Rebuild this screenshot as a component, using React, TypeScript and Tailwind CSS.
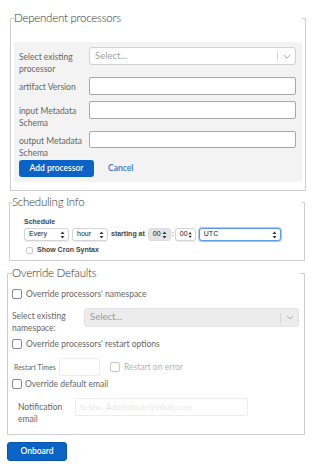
import React from "react";

const Chevron = () => (
  <svg width="8" height="5" viewBox="0 0 8 5" fill="none">
    <path d="M1 1l3 3 3-3" stroke="#aaa" strokeWidth="1" />
  </svg>
);

const UpDown = () => (
  <svg width="5" height="8" viewBox="0 0 5 8" fill="#333">
    <path d="M2.5 0.5L4.5 3H0.5z" />
    <path d="M2.5 7.5L4.5 5H0.5z" />
  </svg>
);

const RSelect = ({ disabled, w }: { disabled?: boolean; w: string }) => (
  <div
    className={`${w} flex items-center rounded-[3px] border ${
      disabled ? "bg-[#ececec] border-[#e2e2e2]" : "bg-white border-[#d2d2d2]"
    }`}
  >
    <span className={`flex-1 pl-[5px] text-[9.5px] ${disabled ? "text-[#9a9a9a]" : "text-[#a0a0a0]"}`}>Select...</span>
    <span className="h-[10px] w-px bg-[#d6d6d6]" />
    <span className="w-[17px] flex justify-center">
      <Chevron />
    </span>
  </div>
);

const MacSelect = ({ label, w, gray, focus }: { label: string; w: string; gray?: boolean; focus?: boolean }) => (
  <div
    className={`${w} h-[13px] flex items-center justify-between rounded-[3px] pl-[4px] pr-[3px] border ${
      gray
        ? "bg-[#e4e4e4] border-[#dcdcdc]"
        : focus
        ? "bg-white border-[#5b9ae8] shadow-[0_0_0_1px_#a9c9f3]"
        : "bg-white border-[#d4d4d4] shadow-[0_1px_1px_rgba(0,0,0,0.08)]"
    }`}
  >
    <span className="text-[7px] text-[#222]">{label}</span>
    <UpDown />
  </div>
);

const Check = ({ light, size = "w-[10px] h-[10px]" }: { light?: boolean; size?: string }) => (
  <span className={`${size} shrink-0 inline-block rounded-[2px] border bg-white ${light ? "border-[#c8c8c8]" : "border-[#8a8a8a]"}`} />
);

const legendCls = "w-full text-[11.5px] leading-[16px] font-light text-[#333] tracking-[-0.25px]";

export default function App() {
  return (
    <div className="w-[324px] h-[470px] bg-white overflow-hidden font-['Lato','Noto_Sans',sans-serif] text-[#666] pt-[10px]">
      {/* Dependent processors */}
      <fieldset className="ml-[10px] w-[296px] border border-[#cfcfcf] px-[3px] pb-[8px]">
        <legend className={legendCls}>Dependent processors</legend>
        <div className="mt-[16px] bg-[#f3f3f3] pl-[5px] pr-[6px] pt-[5px] pb-[5px]">
          <div className="flex items-start">
            <div className="w-[70px] pt-[4px] pb-[2px] text-[8.5px] leading-[12px]">Select existing processor</div>
            <div className="mb-[6px]">
              <RSelect w="w-[207px] h-[18px]" />
            </div>
          </div>
          <div className="flex items-start">
            <div className="w-[70px] pt-[4px] pb-[2px] text-[8.5px] leading-[12px]">artifact Version</div>
            <div className="mb-[6px] w-[207px] h-[18px] border border-[#a8a8a8] rounded-[2px] bg-white" />
          </div>
          <div className="flex items-start">
            <div className="w-[70px] pt-[4px] pb-[2px] text-[8.5px] leading-[12px]">input Metadata Schema</div>
            <div className="mb-[6px] w-[207px] h-[18px] border border-[#a8a8a8] rounded-[2px] bg-white" />
          </div>
          <div className="flex items-start">
            <div className="w-[70px] pt-[4px] pb-[2px] text-[8.5px] leading-[12px]">output Metadata Schema</div>
            <div className="mb-[6px] w-[207px] h-[17px] border border-[#a8a8a8] rounded-[2px] bg-white" />
          </div>
          <div className="flex items-center -mt-[1px]">
            <div className="w-[75px] h-[17px] rounded-[3px] bg-[#0b63c5] text-white text-[8.5px] font-semibold flex items-center justify-center">
              Add processor
            </div>
            <span className="ml-[14px] text-[8.5px] font-semibold text-[#2f76c9]">Cancel</span>
          </div>
        </div>
      </fieldset>

      {/* Scheduling Info */}
      <fieldset className="mt-[3px] ml-[9px] w-[296px] border border-[#cfcfcf] px-[2px] pb-[5px]">
        <legend className={legendCls}>Scheduling Info</legend>
        <div className="mt-[7px] pl-[12px] font-['Liberation_Sans',sans-serif]">
          <div className="text-[7px] leading-[10px] font-bold text-[#444]">Schedule</div>
          <div className="mt-[1px] flex items-center">
            <MacSelect label="Every" w="w-[45px]" />
            <div className="w-[3px]" />
            <MacSelect label="hour" w="w-[36px]" />
            <span className="ml-[3px] text-[7px] font-bold text-[#444]">starting at</span>
            <div className="w-[3px]" />
            <MacSelect label="00" w="w-[23px]" gray />
            <span className="mx-[1px] text-[7px] text-[#333]">:</span>
            <MacSelect label="00" w="w-[21px]" />
            <div className="w-[3px]" />
            <MacSelect label="UTC" w="w-[82px]" focus />
          </div>
          <div className="mt-[4px] flex items-center pl-[2px] leading-[10px]">
            <Check size="w-[7px] h-[7px]" light />
            <span className="ml-[4px] text-[7px] font-bold text-[#444]">Show Cron Syntax</span>
          </div>
        </div>
      </fieldset>

      {/* Override Defaults */}
      <fieldset className="mt-[4px] ml-[7px] w-[298px] border border-[#cfcfcf] px-[4px] pb-[9px]">
        <legend className={legendCls}>Override Defaults</legend>
        <div className="mt-[8px] flex items-center h-[10px]">
          <Check />
          <span className="ml-[4px] text-[8.5px]">Override processors' namespace</span>
        </div>
        <div className="mt-[9px] flex items-start">
          <div className="w-[72px] pt-[3px] text-[8.5px] leading-[11.5px]">Select existing namespace:</div>
          <RSelect w="w-[215px] h-[19px]" disabled />
        </div>
        <div className="mt-[5px] flex items-center h-[10px]">
          <Check />
          <span className="ml-[4px] text-[8.5px]">Override processors' restart options</span>
        </div>
        <div className="mt-[9px] flex items-center">
          <span className="ml-[2px] w-[45px] text-[7px]">Restart Times</span>
          <div className="w-[41px] h-[18px] border border-[#ececec] rounded-[2px] bg-white" />
          <span className="ml-[10px] flex">
            <Check light />
          </span>
          <span className="ml-[4px] text-[8.5px] text-[#b4b4b4]">Restart on error</span>
        </div>
        <div className="mt-[3px] flex items-center h-[10px]">
          <Check />
          <span className="ml-[3px] text-[8.5px]">Override default email</span>
        </div>
        <div className="mt-[9px] flex items-start">
          <div className="ml-[6px] w-[57px] pt-[3px] text-[8.5px] leading-[12px]">Notification email</div>
          <div className="w-[173px] h-[18px] border border-[#ececec] rounded-[2px] bg-white flex items-center pl-[4px]">
            <span className="text-[8.5px] font-light text-[#d4d4d4]">Seshu_Adunuthula@intuit.com</span>
          </div>
        </div>
      </fieldset>

      <div className="mt-[7px] ml-[7px] w-[60px] h-[19px] rounded-[3px] bg-[#0c63c6] border border-[#0a55aa] text-white text-[8.5px] font-semibold flex items-center justify-center">
        Onboard
      </div>
    </div>
  );
}
